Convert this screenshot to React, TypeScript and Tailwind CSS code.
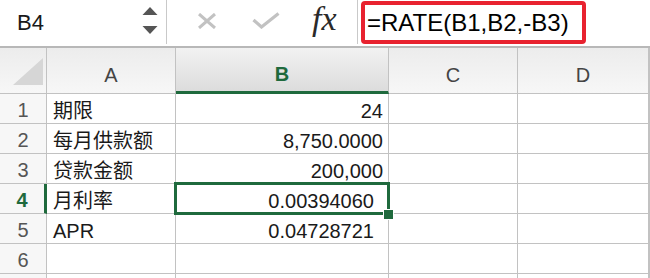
import React from "react";

const GREEN = "#1f6a3d";

const rows: { a: string; b: string; dec?: boolean }[] = [
  { a: "期限", b: "24" },
  { a: "每月供款额", b: "8,750.0000" },
  { a: "贷款金额", b: "200,000" },
  { a: "月利率", b: "0.00394060", dec: true },
  { a: "APR", b: "0.04728721", dec: true },
  { a: "", b: "" },
  { a: "", b: "" },
];

const font = { fontFamily: '"Liberation Sans", "Noto Sans CJK SC", Arial, sans-serif' };

export default function App() {
  return (
    <div className="w-[650px] h-[278px] overflow-hidden bg-white text-[#1a1a1a]" style={font}>
      {/* formula bar */}
      <div className="flex h-[48px] border-b-2 border-[#b8b8b8] bg-white">
        <div className="relative flex w-[167px] h-[44px] items-center border-r border-[#c9c9c9]">
          <span className="pl-[17px] pt-[2px] text-[22px] leading-none">B4</span>
          <svg className="absolute left-[142px] top-[7px]" width="16" height="30" viewBox="0 0 16 30">
            <path d="M8 0 L15.5 8 L0.5 8 Z" fill="#555" />
            <path d="M0.5 19 L15.5 19 L8 27 Z" fill="#555" />
          </svg>
        </div>
        <div className="relative flex w-[191px] h-[44px] items-center border-r border-[#c9c9c9]">
          <svg className="absolute left-[30px] top-[13px]" width="20" height="16" viewBox="0 0 20 16">
            <path d="M2 1 L18 15 M18 1 L2 15" stroke="#c2c2c2" strokeWidth="3" />
          </svg>
          <svg className="absolute left-[85px] top-[12px]" width="28" height="17" viewBox="0 0 28 17">
            <path d="M1.5 8 L9.5 15 L26.5 1.5" stroke="#c2c2c2" strokeWidth="3.2" fill="none" />
          </svg>
          <span
            className="absolute left-[145px] top-[2px] text-[34px] italic leading-none text-[#2a2a2a]"
            style={{ fontFamily: '"Liberation Serif", "Times New Roman", serif' }}
          >
            fx
          </span>
        </div>
        <div className="flex-1 pl-[3px] pt-[1px]">
          <div className="flex h-[43px] w-[225px] items-center rounded-[4px] border-[4px] border-[#e8222f] pl-[2px]">
            <span className="pt-[1px] text-[24px] leading-none text-black">=RATE(B1,B2,-B3)</span>
          </div>
        </div>
      </div>

      {/* sheet */}
      <div className="grid grid-cols-[47px_129px_213px_129px_132px]">
        {/* header row */}
        <div className="relative h-[46px] border-r border-b border-[#c2c2c2] bg-gradient-to-b from-[#ececec] to-[#f7f7f7]">
          <svg className="absolute left-[13px] top-[10px]" width="30" height="28" viewBox="0 0 30 28">
            <path d="M30 0 L30 27 L0 27 Z" fill="#d6d6d6" />
          </svg>
        </div>
        <div className="flex h-[46px] items-center justify-center border-r border-b border-[#c2c2c2] bg-gradient-to-b from-[#ececec] to-[#f7f7f7] pt-[8px] text-[20px] text-[#444]">
          A
        </div>
        <div
          className="flex h-[46px] items-center justify-center border-r border-[#c2c2c2] border-b-[3px] bg-gradient-to-b from-[#f2f2f2] to-[#dcdcdc] pt-[9px] text-[20px] font-bold"
          style={{ color: GREEN, borderBottomColor: GREEN }}
        >
          B
        </div>
        <div className="flex h-[46px] items-center justify-center border-r border-b border-[#c2c2c2] bg-gradient-to-b from-[#ececec] to-[#f7f7f7] pt-[8px] text-[20px] text-[#444]">
          C
        </div>
        <div className="flex h-[46px] items-center justify-center border-r-2 border-b border-[#c2c2c2] bg-gradient-to-b from-[#ececec] to-[#f7f7f7] pt-[8px] text-[20px] text-[#444]">
          D
        </div>

        {rows.map((r, i) => {
          const sel = i === 3;
          return (
            <React.Fragment key={i}>
              <div
                className={
                  "flex h-[30px] items-end justify-center border-b border-[#c2c2c2] bg-[#f7f7f7] pb-[1px] text-[20px] leading-[24px] " +
                  (sel ? "border-r-[3px] font-bold" : "border-r text-[#555]")
                }
                style={sel ? { color: GREEN, borderRightColor: GREEN } : undefined}
              >
                {i < 6 ? i + 1 : ""}
              </div>
              <div className="flex h-[30px] items-end border-r border-b border-[#c2c2c2] pl-[6px] text-[20px] leading-[24px] whitespace-nowrap">
                {r.a}
              </div>
              <div
                className={
                  "relative flex h-[30px] items-end justify-end border-r border-b border-[#c2c2c2] text-[20px] leading-[24px] " +
                  (r.dec ? "pr-[14px]" : "pr-[5px]")
                }
              >
                {r.b}
                {sel && (
                  <>
                    <div
                      className="absolute -left-[2px] -top-[2px] -right-[2px] -bottom-[2px] z-10 border-[3px]"
                      style={{ borderColor: GREEN }}
                    />
                    <div
                      className="absolute -right-[6px] -bottom-[7px] z-20 h-[11px] w-[11px] border border-white"
                      style={{ backgroundColor: GREEN }}
                    />
                  </>
                )}
              </div>
              <div className="h-[30px] border-r border-b border-[#c2c2c2]" />
              <div className="h-[30px] border-r-2 border-b border-[#c2c2c2]" />
            </React.Fragment>
          );
        })}
      </div>
    </div>
  );
}
